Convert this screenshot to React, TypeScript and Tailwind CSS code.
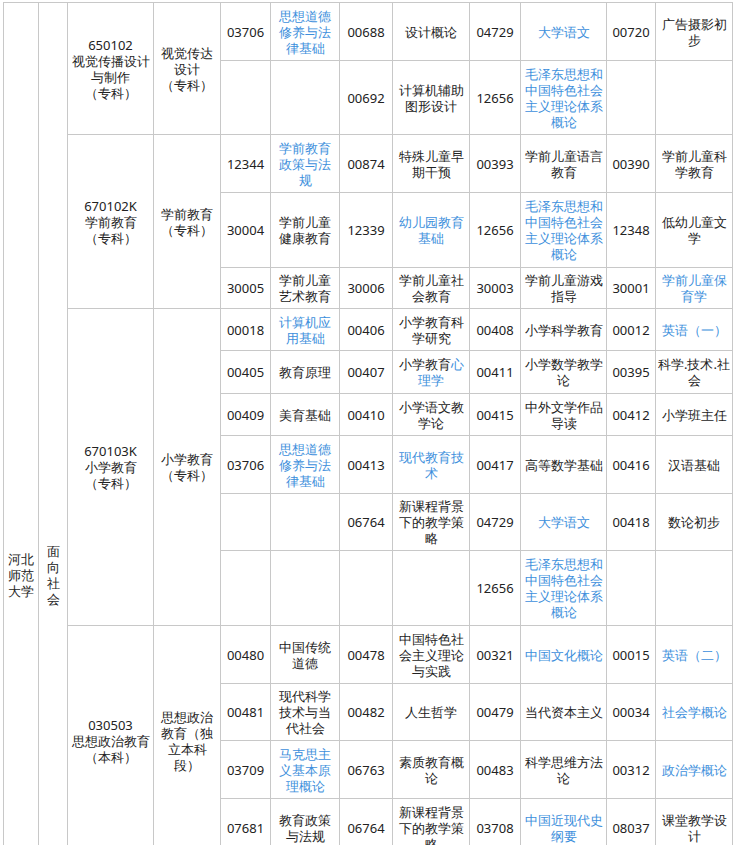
import React from "react";

function Cell({ t, rs }: { t: React.ReactNode; rs?: number }) {
  return (
    <td rowSpan={rs} className="border border-[#c8c8c8] text-center align-middle px-[2px] text-[13px] leading-[16px] text-[#222]">
      {t}
    </td>
  );
}
const b = (s: string) => <span className="text-[#3d8fdc]">{s}</span>;

const rows: { h: string; pre?: React.ReactNode; cells: React.ReactNode[] }[] = [
  { h: "h-[58px]", pre: <><Cell t={<>650102<br />视觉传播设计与制作<br />（专科）</>} rs={2} /><Cell t={<>视觉传达设计<br />（专科）</>} rs={2} /></>, cells: ["03706", b("思想道德修养与法律基础"), "00688", "设计概论", "04729", b("大学语文"), "00720", "广告摄影初步"] },
  { h: "h-[74px]", cells: ["", "", "00692", "计算机辅助图形设计", "12656", b("毛泽东思想和中国特色社会主义理论体系概论"), "", ""] },
  { h: "h-[58px]", pre: <><Cell t={<>670102K<br />学前教育<br />（专科）</>} rs={3} /><Cell t={<>学前教育<br />（专科）</>} rs={3} /></>, cells: ["12344", b("学前教育政策与法规"), "00874", "特殊儿童早期干预", "00393", "学前儿童语言教育", "00390", "学前儿童科学教育"] },
  { h: "h-[75px]", cells: ["30004", "学前儿童健康教育", "12339", b("幼儿园教育基础"), "12656", b("毛泽东思想和中国特色社会主义理论体系概论"), "12348", "低幼儿童文学"] },
  { h: "h-[41px]", cells: ["30005", "学前儿童艺术教育", "30006", "学前儿童社会教育", "30003", "学前儿童游戏指导", "30001", b("学前儿童保育学")] },
  { h: "h-[42px]", pre: <><Cell t={<>670103K<br />小学教育<br />（专科）</>} rs={6} /><Cell t={<>小学教育<br />（专科）</>} rs={6} /></>, cells: ["00018", b("计算机应用基础"), "00406", "小学教育科学研究", "00408", "小学科学教育", "00012", b("英语（一）")] },
  { h: "h-[43px]", cells: ["00405", "教育原理", "00407", <>小学教育{b("心理学")}</>, "00411", "小学数学教学论", "00395", "科学.技术.社会"] },
  { h: "h-[42px]", cells: ["00409", "美育基础", "00410", "小学语文教学论", "00415", "中外文学作品导读", "00412", "小学班主任"] },
  { h: "h-[58px]", cells: ["03706", b("思想道德修养与法律基础"), "00413", b("现代教育技术"), "00417", "高等数学基础", "00416", "汉语基础"] },
  { h: "h-[57px]", cells: ["", "", "06764", "新课程背景下的教学策略", "04729", b("大学语文"), "00418", "数论初步"] },
  { h: "h-[75px]", cells: ["", "", "", "", "12656", b("毛泽东思想和中国特色社会主义理论体系概论"), "", ""] },
  { h: "h-[58px]", pre: <><Cell t={<>030503<br />思想政治教育<br />（本科）</>} rs={4} /><Cell t={<>思想政治教育（独立本科段）</>} rs={4} /></>, cells: ["00480", "中国传统道德", "00478", "中国特色社会主义理论与实践", "00321", b("中国文化概论"), "00015", b("英语（二）")] },
  { h: "h-[57px]", cells: ["00481", "现代科学技术与当代社会", "00482", "人生哲学", "00479", "当代资本主义", "00034", b("社会学概论")] },
  { h: "h-[58px]", cells: ["03709", b("马克思主义基本原理概论"), "06763", "素质教育概论", "00483", "科学思维方法论", "00312", b("政治学概论")] },
  { h: "h-[58px]", cells: ["07681", "教育政策与法规", "06764", "新课程背景下的教学策略", "03708", b("中国近现代史纲要"), "08037", "课堂教学设计"] },
  { h: "h-[290px]", pre: <><Cell t="" /><Cell t="" /></>, cells: ["", "", "", "", "", "", "", ""] },
];

const widths = ["w-[35px]", "w-[29px]", "w-[86px]", "w-[67px]", "w-[50px]", "w-[69px]", "w-[53px]", "w-[77px]", "w-[51px]", "w-[86px]", "w-[49px]", "w-[77px]"];

export default function App() {
  return (
    <div className="w-[748px] h-[845px] overflow-hidden bg-white font-['Noto_Sans_CJK_SC','Noto_Sans',sans-serif]">
      <table className="border-collapse ml-[3px] mt-[2px] table-fixed w-[729px]">
        <colgroup>
          {widths.map((w, i) => <col key={i} className={w} />)}
        </colgroup>
        <tbody>
          {rows.map((r, i) => (
            <tr key={i} className={r.h}>
              {i === 0 && (
                <>
                  <Cell t="河北师范大学" rs={rows.length} />
                  <Cell t="面向社会" rs={rows.length} />
                </>
              )}
              {r.pre}
              {r.cells.map((c, j) => <Cell key={j} t={c} />)}
            </tr>
          ))}
        </tbody>
      </table>
    </div>
  );
}
